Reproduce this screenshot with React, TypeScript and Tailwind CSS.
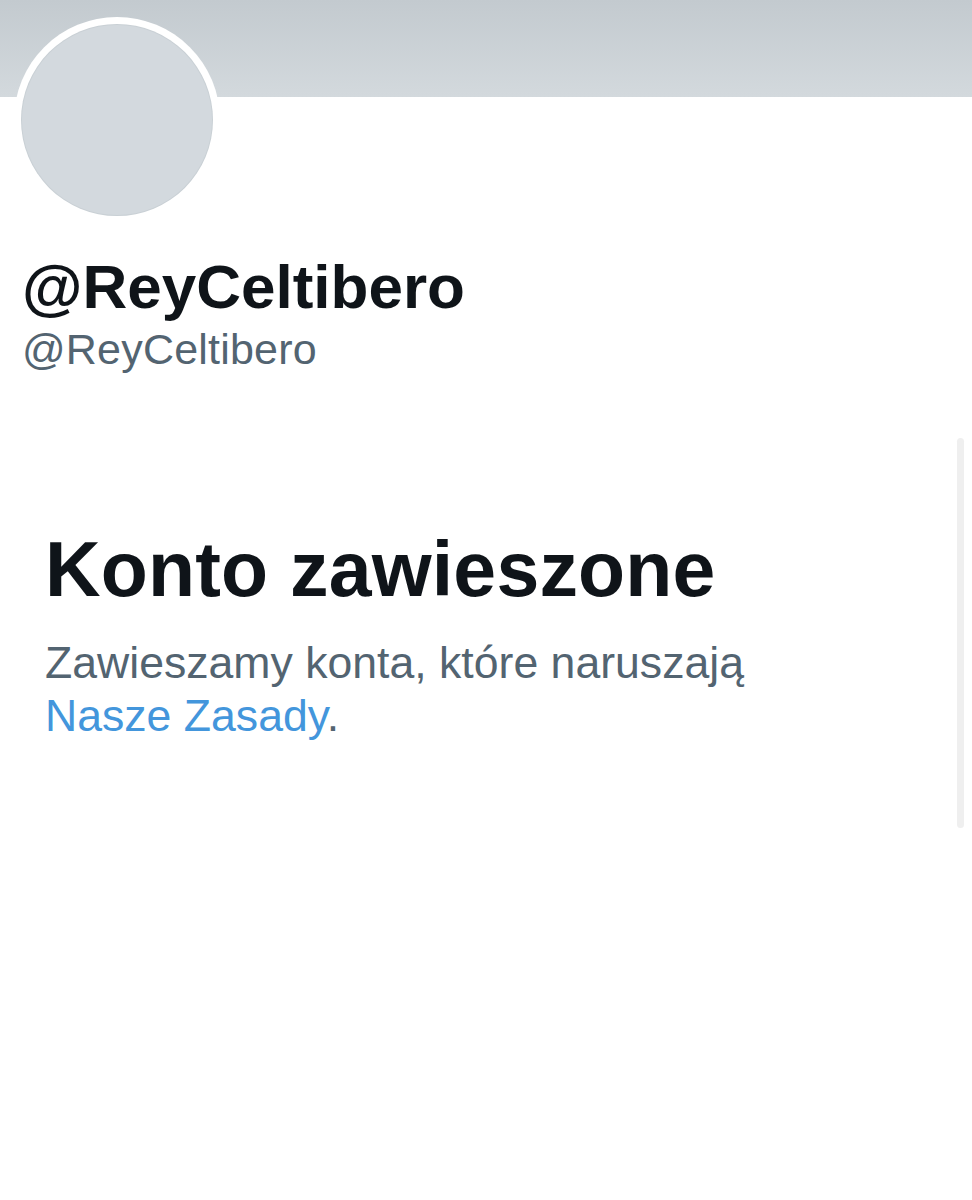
export default function App() {
  return (
    <div
      className="relative min-h-[1200px] overflow-hidden bg-white"
      style={{ fontFamily: '"Liberation Sans", Arial, sans-serif' }}
    >
      <div className="h-[97px] bg-gradient-to-b from-[#c3cacf] to-[#d3d9dd]" />

      <div className="-mt-[80px] ml-[14px] h-[206px] w-[206px] rounded-full bg-white p-[8px]">
        <div className="h-full w-full rounded-full bg-[#d3d9de] ring-1 ring-[#c9d0d5]" />
      </div>

      <div className="pl-[22px]">
        <h1 className="mt-[33px] text-[62px] font-bold leading-none text-[#0f1419]">
          @ReyCeltibero
        </h1>
        <p className="mt-[10px] text-[43px] leading-none tracking-[0.2px] text-[#536471]">
          @ReyCeltibero
        </p>
      </div>

      <section className="mt-[160px] pl-[45px]">
        <h2 className="text-[77px] font-bold leading-none tracking-[0.2px] text-[#0f1419]">
          Konto zawieszone
        </h2>
        <p className="mt-[28px] w-[780px] text-[44.6px] leading-[53px] text-[#536471]">
          Zawieszamy konta, które naruszają{" "}
          <a href="#" className="text-[#4396dc]">
            Nasze Zasady
          </a>
          .
        </p>
      </section>

      <div className="absolute left-[957px] top-[438px] h-[390px] w-[7px] rounded-full bg-[#efefef]" />
    </div>
  );
}
